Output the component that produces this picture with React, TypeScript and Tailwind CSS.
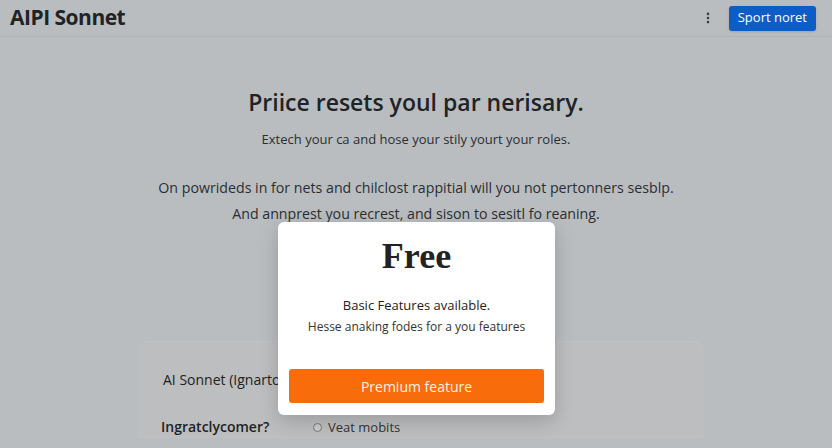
import { EllipsisVertical } from "lucide-react";

const sans = "font-['Open_Sans','Noto_Sans',sans-serif]";

function Header() {
  return (
    <header className="flex h-[37px] items-center justify-between border-b border-black/5 pl-[10px] pr-[16px]">
      <h1 className="text-[21px] font-bold tracking-[-0.5px] text-[#1f2326]">AIPI Sonnet</h1>
      <div className="flex items-center gap-[14px]">
        <EllipsisVertical className="h-[14px] w-[14px] text-[#3a3d40]" strokeWidth={2.5} />
        <button className="h-[25px] rounded-[3px] bg-[#0d5dc8] px-[9px] text-[13px] text-white shadow-sm">
          Sport noret
        </button>
      </div>
    </header>
  );
}

function Hero() {
  return (
    <section className="flex flex-col items-center pt-[51px] text-center">
      <h2 className="text-[23px] font-semibold leading-[28px] text-[#202326]">
        Priice resets youl par nerisary.
      </h2>
      <p className="mt-[14px] text-[13px] leading-[18px] text-[#2b2e31]">
        Extech your ca and hose your stily yourt your roles.
      </p>
      <p className="mt-[27px] text-[14.2px] leading-[26px] text-[#2b2e31]">
        On powrideds in for nets and chilclost rappitial will you not pertonners sesblp.
        <br />
        And annprest you recrest, and sison to sesitl fo reaning.
      </p>
    </section>
  );
}

function Details() {
  return (
    <section className="ml-[140px] mt-[115px] flex w-[562px] flex-col gap-[27px] rounded-t-[8px] bg-[#bdbebf] px-[21px] pt-[28px] shadow-[0_0_0_1px_rgba(255,255,255,0.08)]">
      <p className="pl-[2px] text-[14px] leading-[20px] text-[#222]">AI Sonnet (Ignarto</p>
      <div className="flex items-center">
        <span className="w-[152px] text-[14px] font-semibold leading-[20px] text-[#1f2224]">Ingratclycomer?</span>
        <span className="flex items-center gap-[6px] text-[13px] leading-[20px] text-[#333]">
          <span className="h-[9px] w-[9px] rounded-full border border-[#777] bg-[#ccc]" />
          Veat mobits
        </span>
      </div>
    </section>
  );
}

function PlanModal() {
  return (
    <div className="absolute left-[278px] top-[222px] flex w-[277px] flex-col items-center rounded-[6px] bg-white px-[11px] pb-[12px] pt-[14px] shadow-[0_6px_20px_rgba(0,0,0,0.18)]">
      <h3 className="font-['Liberation_Serif',serif] text-[36px] font-bold leading-[40px] text-[#222]">Free</h3>
      <p className="mt-[20px] text-[13px] leading-[18px] text-[#222]">Basic Features available.</p>
      <p className="mt-[4px] text-[12px] leading-[17px] text-[#333]">Hesse anaking fodes for a you features</p>
      <button className="mt-[34px] h-[34px] w-full rounded-[3px] bg-[#f86c0b] text-[14px] font-medium text-[#fff3e6]">
        Premium feature
      </button>
    </div>
  );
}

export default function App() {
  return (
    <div className={`relative h-[448px] w-[832px] overflow-hidden bg-[#b9bdc0] ${sans}`}>
      <Header />
      <Hero />
      <Details />
      <PlanModal />
    </div>
  );
}
